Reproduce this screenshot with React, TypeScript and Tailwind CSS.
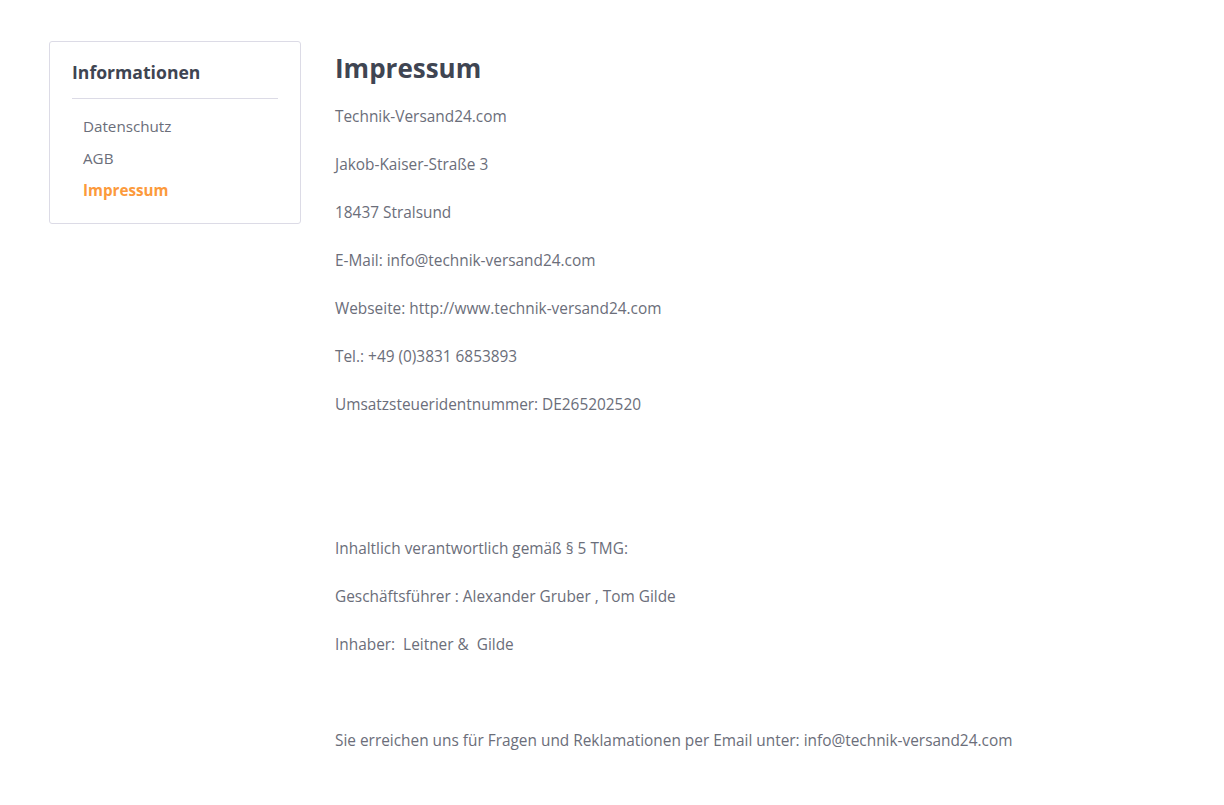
const lines: string[] = [
  'Technik-Versand24.com',
  'Jakob-Kaiser-Straße 3',
  '18437 Stralsund',
  'E-Mail: info@technik-versand24.com',
  'Webseite: http://www.technik-versand24.com',
  'Tel.: +49 (0)3831 6853893',
  'Umsatzsteueridentnummer: DE265202520',
  '',
  '',
  'Inhaltlich verantwortlich gemäß § 5 TMG:',
  'Geschäftsführer : Alexander Gruber , Tom Gilde',
  'Inhaber:\u00a0 Leitner &\u00a0 Gilde',
  '',
  'Sie erreichen uns für Fragen und Reklamationen per Email unter: info@technik-versand24.com',
];

export default function App() {
  return (
    <div
      className="min-h-screen bg-white pl-[49px] pt-[41px] flex gap-[34px]"
      style={{ fontFamily: '"Open Sans", sans-serif' }}
    >
      {/* Sidebar */}
      <aside className="w-[252px] shrink-0 self-start rounded-[3px] border border-[#dcdbe6] px-[22px] pt-[18px] pb-[23px]">
        <h3 className="text-[17.6px] leading-[24px] font-bold text-[#3f4552]">Informationen</h3>
        <div className="mt-[14px] h-px bg-[#dcdbe6]" />
        <ul className="mt-[17px] flex flex-col gap-[12px] pl-[11px] text-[15.2px] leading-[20px]">
          <li className="text-[#6b6e7a]">Datenschutz</li>
          <li className="text-[#6b6e7a]">AGB</li>
          <li className="font-bold text-[#fc9a3c]">Impressum</li>
        </ul>
      </aside>

      {/* Content */}
      <main className="flex-1 pt-[10px]">
        <h1 className="text-[26px] leading-[34px] font-bold text-[#3f4552]">Impressum</h1>
        <div className="mt-[20px] text-[15.4px] leading-[24px] text-[#6b6e7a]">
          {lines.map((l, i) => (
            <p key={i} className="mb-[24px] min-h-[24px]">
              {l}
            </p>
          ))}
        </div>
      </main>
    </div>
  );
}
